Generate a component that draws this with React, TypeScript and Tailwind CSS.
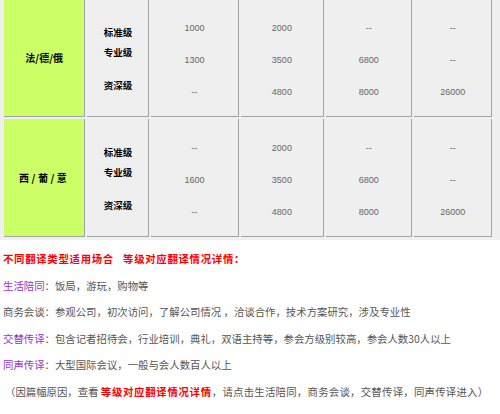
import React from 'react';

const rows = [
  {
    name: '法/德/俄',
    wide: false,
    prices: [
      ['1000', '1300', '--'],
      ['2000', '3500', '4800'],
      ['--', '6800', '8000'],
      ['--', '--', '26000'],
    ],
  },
  {
    name: '西/葡/意',
    wide: true,
    prices: [
      ['--', '1600', '--'],
      ['2000', '3500', '4800'],
      ['--', '6800', '8000'],
      ['--', '--', '26000'],
    ],
  },
];

const priceWidths = ['w-[89px]', 'w-[85px]', 'w-[88px]', 'w-[79px]'];

const cell = 'h-[118px] bg-[#efefef] border-r border-b border-[#a3a3a3]';

export default function App() {
  return (
    <div className="w-[500px] h-[414px] overflow-hidden bg-white font-['Noto_Sans_CJK_SC',sans-serif]">
      <div className="bg-[#efefef] pl-1 pr-2 pb-[3px] -mt-[1px] flex flex-col gap-[2px]">
        {rows.map((r) => (
          <div key={r.name} className="flex gap-[2px]">
            <div className="w-[83px] flex items-center justify-center h-[118px] bg-[#ccff66] border-r border-b border-[#a3a3a3]">
              <span className={`text-[10px] font-bold text-black ${r.wide ? 'tracking-[2.5px]' : ''}`}>{r.name}</span>
            </div>
            <div className={`w-[63px] ${cell} flex flex-col items-center pt-[23px] text-[9.5px] font-bold text-black`}>
              <div className="h-5 leading-5">标准级</div>
              <div className="h-5 leading-5">专业级</div>
              <div className="h-5 leading-5 mt-[13px]">资深级</div>
            </div>
            {r.prices.map((col, i) => (
              <div key={i} className={`${priceWidths[i]} ${cell} flex flex-col items-center pt-[13px] text-[9px] text-[#666] font-['Liberation_Sans',sans-serif]`}>
                {col.map((p, j) => (
                  <div key={j} className="h-8 leading-8">{p}</div>
                ))}
              </div>
            ))}
          </div>
        ))}
      </div>

      <div className="mt-[6px] pl-[3px] text-[10.4px] leading-[26.6px] text-[#555] whitespace-nowrap">
        <div className="text-[#ff0000] font-bold tracking-[0.7px]">不同翻译类型适用场合&nbsp;&nbsp;&nbsp;等级对应翻译情况详情：</div>
        <div><span className="text-[#9933cc]">生活陪同</span>：饭局，游玩，购物等</div>
        <div>商务会谈：参观公司，初次访问，了解公司情况 ，洽谈合作，技术方案研究，涉及专业性</div>
        <div><span className="text-[#9933cc]">交替传译</span>：包含记者招待会，行业培训，典礼，双语主持等，参会方级别较高，参会人数30人以上</div>
        <div><span className="text-[#9933cc]">同声传译</span>：大型国际会议，一般与会人数百人以上</div>
        <div className="pl-[2px]">（因篇幅原因，查看 <span className="text-[#ff0000] font-bold tracking-[0.7px]">等级对应翻译情况详情</span><span className="tracking-[0.25px]">，请点击生活陪同，商务会谈，交替传译，同声传译进入）</span></div>
      </div>
    </div>
  );
}
